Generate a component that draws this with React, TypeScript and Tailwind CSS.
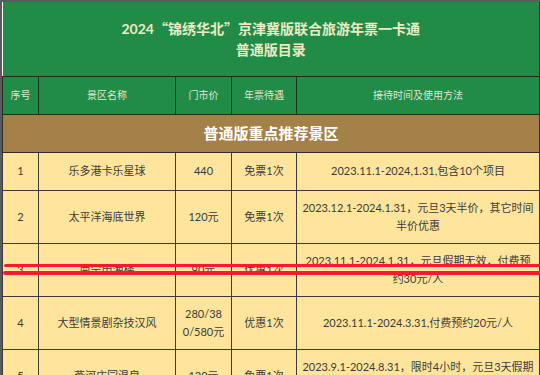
import React from "react";

type Row = {
  no: string;
  name: string;
  price: React.ReactNode;
  perk: string;
  usage: React.ReactNode;
};

const rows: Row[] = [
  {
    no: "1",
    name: "乐多港卡乐星球",
    price: "440",
    perk: "免票1次",
    usage: "2023.11.1-2024,1.31,包含10个项目",
  },
  {
    no: "2",
    name: "太平洋海底世界",
    price: "120元",
    perk: "免票1次",
    usage: (
      <>
        2023.12.1-2024.1.31，元旦3天半价，其它时间
        <br />
        半价优惠
      </>
    ),
  },
  {
    no: "3",
    name: "南宁申湘楼",
    price: "90元",
    perk: "优惠1次",
    usage: (
      <>
        2023.11.1-2024.1.31，元旦假期无效，付费预
        <br />
        约30元/人
      </>
    ),
  },
  {
    no: "4",
    name: "大型情景剧杂技汉风",
    price: (
      <>
        280/38
        <br />
        0/580元
      </>
    ),
    perk: "优惠1次",
    usage: "2023.11.1-2024.3.31,付费预约20元/人",
  },
  {
    no: "5",
    name: "燕河庄园温泉",
    price: "120元",
    perk: "免票1次",
    usage: (
      <>
        2023.9.1-2024.8.31，限时4小时，元旦3天假期
        <br />
        无效，需提前预约
      </>
    ),
  },
];

const font = { fontFamily: '"Lato", "Noto Sans CJK SC", sans-serif' };
const cjk = { fontFamily: '"Noto Sans CJK SC", sans-serif' };

export default function App() {
  return (
    <div className="relative w-[540px] h-[375px] overflow-hidden bg-white" style={font}>
      <div className="border-l-2 border-t-2 border-[#5b5b5b] w-[540px]">
        <table className="table-fixed border-collapse w-[537px]">
          <colgroup>
            <col className="w-[36px]" />
            <col className="w-[137px]" />
            <col className="w-[56px]" />
            <col className="w-[65px]" />
            <col className="w-[243px]" />
          </colgroup>
          <tbody>
            <tr className="h-[74px] bg-[#218b48]">
              <td colSpan={5} className="text-center text-[#ecebc4] font-bold text-[14px] leading-[21px] border-r border-[#2e2e2e]">
                2024<span style={cjk}>“</span>锦绣华北<span style={cjk}>”</span>京津冀版联合旅游年票一卡通
                <br />
                普通版目录
              </td>
            </tr>
            <tr className="h-[38px] bg-[#218b48] text-[#dfe8d2] text-[10px]">
              <td className="border border-[#1f2f1f] text-center">序号</td>
              <td className="border border-[#1f2f1f] text-center">景区名称</td>
              <td className="border border-[#1f2f1f] text-center">门市价</td>
              <td className="border border-[#1f2f1f] text-center">年票待遇</td>
              <td className="border border-[#1f2f1f] text-center">接待时间及使用方法</td>
            </tr>
            <tr className="h-[38px] bg-[#a5814a]">
              <td colSpan={5} className="border border-[#2e2e2e] text-center text-white font-bold text-[15px]">
                普通版重点推荐景区
              </td>
            </tr>
            {rows.map((r, i) => (
              <tr key={r.no} className={`${i === 0 ? "h-[38px]" : "h-[53px]"} bg-[#ffe59b] text-[#3b3b3b] text-[11px] leading-[18px]`}>
                <td className="border border-[#3a3a3a] text-center">{r.no}</td>
                <td className="border border-[#3a3a3a] text-center">{r.name}</td>
                <td className="border border-[#3a3a3a] text-center">{r.price}</td>
                <td className="border border-[#3a3a3a] text-center">{r.perk}</td>
                <td className="border border-[#3a3a3a] text-center whitespace-nowrap">{r.usage}</td>
              </tr>
            ))}
          </tbody>
        </table>
      </div>

      {/* hand-drawn strike lines over row 3 */}
      <div className="absolute left-[4px] right-0 top-[264px] h-[3px] bg-[#ff1830] rounded-l-full" />
      <div className="absolute left-[3px] right-0 top-[271px] h-[4px] bg-[#ff1830] rounded-l-full" />
    </div>
  );
}
